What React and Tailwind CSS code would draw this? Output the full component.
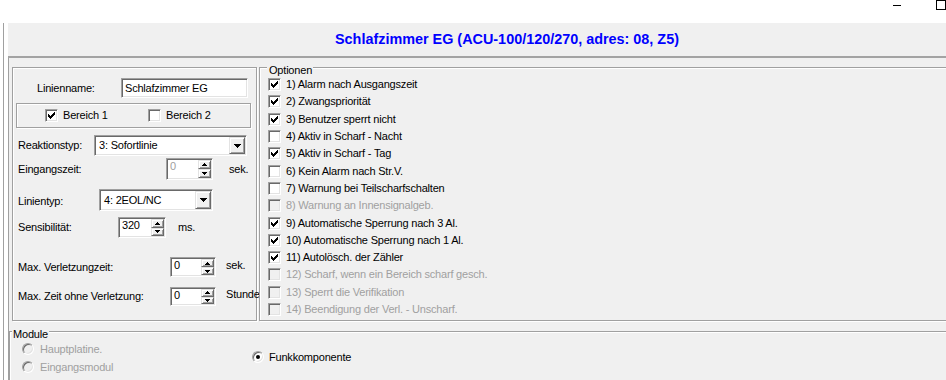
import React from "react";

const sunken =
  "border border-t-[#a0a0a0] border-l-[#a0a0a0] border-b-white border-r-white shadow-[inset_1px_1px_0_#696969,inset_-1px_-1px_0_#e3e3e3]";
const raised =
  "bg-[#f0f0f0] border border-t-[#e3e3e3] border-l-[#e3e3e3] border-b-[#696969] border-r-[#696969] shadow-[inset_1px_1px_0_#fff,inset_-1px_-1px_0_#a0a0a0]";
const etched = "border border-[#a0a0a0] shadow-[inset_1px_1px_0_#fff,1px_1px_0_#fff]";

function CheckMark() {
  return (
    <svg width="7" height="7" viewBox="0 0 7 7" shapeRendering="crispEdges" className="block">
      <path
        fill="#000"
        d="M6 0h1v1h-1zM5 1h2v1h-2zM0 2h1v1h-1zM4 2h3v1h-3zM0 3h2v1h-2zM3 3h3v1h-3zM0 4h5v1h-5zM1 5h3v1h-3zM2 6h1v1h-1z"
      />
    </svg>
  );
}

function Check({ checked, disabled }) {
  return (
    <div
      className={`w-[13px] h-[13px] shrink-0 flex items-center justify-center ${sunken} ${
        disabled ? "bg-[#f0f0f0]" : "bg-white"
      }`}
    >
      {checked && <CheckMark />}
    </div>
  );
}

function Radio({ checked, disabled }) {
  return (
    <div
      className={`w-[12px] h-[12px] shrink-0 rounded-full flex items-center justify-center ${sunken} ${
        disabled ? "bg-[#f0f0f0]" : "bg-white"
      }`}
    >
      {checked && <div className="w-[4px] h-[4px] rounded-full bg-black" />}
    </div>
  );
}

function Down7() {
  return (
    <svg width="7" height="4" viewBox="0 0 7 4" shapeRendering="crispEdges" className="block">
      <path fill="#000" d="M0 0h7v1h-7zM1 1h5v1h-5zM2 2h3v1h-3zM3 3h1v1h-1z" />
    </svg>
  );
}

function Up5() {
  return (
    <svg width="5" height="3" viewBox="0 0 5 3" shapeRendering="crispEdges" className="block">
      <path fill="#000" d="M2 0h1v1h-1zM1 1h3v1h-3zM0 2h5v1h-5z" />
    </svg>
  );
}

function Down5() {
  return (
    <svg width="5" height="3" viewBox="0 0 5 3" shapeRendering="crispEdges" className="block">
      <path fill="#000" d="M0 0h5v1h-5zM1 1h3v1h-3zM2 2h1v1h-1z" />
    </svg>
  );
}

function Combo({ cls, text }) {
  return (
    <div className={`${cls} ${sunken} bg-white p-px flex shrink-0`}>
      <div className="flex-1 flex items-center pl-[3px] overflow-hidden whitespace-nowrap">{text}</div>
      <div className={`w-[16px] ${raised} flex items-center justify-center`}>
        <Down7 />
      </div>
    </div>
  );
}

function Spin({ cls, value, disabled }) {
  return (
    <div className={`${cls} ${sunken} bg-white p-px flex shrink-0`}>
      <div className={`flex-1 pl-[2px] whitespace-nowrap ${disabled ? "text-[#a0a0a0]" : ""}`}>{value}</div>
      <div className="w-[13px] flex flex-col">
        <div className={`flex-1 ${raised} flex items-center justify-center`}>
          <Up5 />
        </div>
        <div className={`flex-1 ${raised} flex items-center justify-center`}>
          <Down5 />
        </div>
      </div>
    </div>
  );
}

const opts = [
  ["1) Alarm nach Ausgangszeit", true, false],
  ["2) Zwangspriorität", true, false],
  ["3) Benutzer sperrt nicht", true, false],
  ["4) Aktiv in Scharf - Nacht", false, false],
  ["5) Aktiv in Scharf - Tag", true, false],
  ["6) Kein Alarm nach Str.V.", false, false],
  ["7) Warnung bei Teilscharfschalten", false, false],
  ["8) Warnung an Innensignalgeb.", false, true],
  ["9) Automatische Sperrung nach 3 Al.", true, false],
  ["10) Automatische Sperrung nach 1 Al.", true, false],
  ["11) Autolösch. der Zähler", true, false],
  ["12) Scharf, wenn ein Bereich scharf gesch.", false, true],
  ["13) Sperrt die Verifikation", false, true],
  ["14) Beendigung der Verl. - Unscharf.", false, true],
];

export default function App() {
  return (
    <div className="w-[946px] h-[380px] overflow-hidden bg-white font-['Liberation_Sans',Arial,sans-serif] text-[11px] leading-[13px] tracking-[-0.2px] text-black flex flex-col">
      {/* caption remnant */}
      <div className="h-[23px] shrink-0 flex items-start">
        <div className="flex-1" />
        <div className="w-[8px] h-px bg-black mt-[5px] mr-[35px]" />
        <div className="w-[10px] h-[10px] border border-black" />
      </div>

      <div className="flex flex-1 min-h-0">
        {/* left frame strip */}
        <div className="w-[8px] shrink-0 flex">
          <div className="ml-[3px] w-px bg-[#a0a0a0]" />
        </div>

        {/* main panel */}
        <div className="flex-1 min-w-0 bg-[#f0f0f0] flex flex-col">
          <div className="h-[33px] shrink-0 flex items-center pl-[327px] whitespace-nowrap">
            <span className="text-[14.4px] leading-[17px] tracking-normal font-bold text-[#0000ff]">
              Schlafzimmer EG (ACU-100/120/270, adres: 08, Z5)
            </span>
          </div>
          <div className="h-[2px] shrink-0 bg-[#a3a3a3]" />

          <div className="flex-1 flex flex-col border-l border-[#a0a0a0]">
            <div className="flex mt-[9px] shrink-0">
              {/* left group */}
              <div className={`ml-[3px] w-[245px] h-[254px] shrink-0 ${etched} flex flex-col`}>
                <div className="flex items-center h-[20px] mt-[10px]">
                  <div className="w-[108px] pl-[24px] shrink-0">Linienname:</div>
                  <div className={`w-[127px] h-[20px] ${sunken} bg-white flex items-center pl-[3px] whitespace-nowrap`}>
                    Schlafzimmer EG
                  </div>
                </div>

                <div className={`ml-[3px] w-[235px] h-[25px] mt-[5px] ${etched} flex items-center`}>
                  <div className="w-[131px] pl-[28px] flex items-center gap-[5px] shrink-0">
                    <Check checked />
                    <span>Bereich 1</span>
                  </div>
                  <div className="flex items-center gap-[5px]">
                    <Check />
                    <span>Bereich 2</span>
                  </div>
                </div>

                <div className="flex items-center h-[21px] mt-[7px]">
                  <div className="w-[81px] pl-[5px] shrink-0">Reaktionstyp:</div>
                  <Combo cls="w-[153px] h-[21px]" text="3: Sofortlinie" />
                </div>

                <div className="flex items-center h-[22px] mt-[2px]">
                  <div className="w-[153px] pl-[5px] shrink-0">Eingangszeit:</div>
                  <Spin cls="w-[47px] h-[22px]" value="0" disabled />
                  <span className="ml-[16px]">sek.</span>
                </div>

                <div className="flex items-center h-[22px] mt-[9px]">
                  <div className="w-[86px] pl-[5px] shrink-0 mt-[2px]">Linientyp:</div>
                  <Combo cls="w-[114px] h-[22px]" text="4: 2EOL/NC" />
                </div>

                <div className="flex items-center h-[21px] mt-[6px]">
                  <div className="w-[105px] pl-[5px] shrink-0">Sensibilität:</div>
                  <Spin cls="w-[48px] h-[21px]" value="320" />
                  <span className="ml-[12px]">ms.</span>
                </div>

                <div className="flex items-center h-[20px] mt-[19px]">
                  <div className="w-[157px] pl-[5px] shrink-0">Max. Verletzungzeit:</div>
                  <Spin cls="w-[46px] h-[20px]" value="0" />
                  <span className="ml-[10px] mb-[4px]">sek.</span>
                </div>

                <div className="flex items-center h-[19px] mt-[10px]">
                  <div className="w-[157px] pl-[5px] shrink-0">Max. Zeit ohne Verletzung:</div>
                  <Spin cls="w-[46px] h-[19px]" value="0" />
                  <span className="ml-[10px] mb-[4px] whitespace-nowrap">Stunde</span>
                </div>
              </div>

              {/* options group */}
              <div className={`relative ml-[2px] w-[700px] h-[254px] shrink-0 ${etched}`}>
                <div className="absolute left-[7px] -top-[4px] bg-[#f0f0f0] pl-[2px] pr-[1px]">Optionen</div>
                <div className="pt-[8px] pl-[8px] flex flex-col">
                  {opts.map(([label, checked, disabled]) => (
                    <div key={label} className="h-[17.3px] flex items-center gap-[5px]">
                      <Check checked={checked} disabled={disabled} />
                      <span className={`whitespace-nowrap ${disabled ? "text-[#a0a0a0]" : ""}`}>{label}</span>
                    </div>
                  ))}
                </div>
              </div>
            </div>

            {/* module group */}
            <div className={`relative mt-[10px] w-[960px] h-[70px] shrink-0 ${etched}`}>
              <div className="absolute left-[2px] -top-[4px] bg-[#f0f0f0] pl-px pr-px">Module</div>
              <div className="pt-[8px] flex">
                <div className="w-[242px] pl-[12px] flex flex-col shrink-0">
                  <div className="h-[18px] flex items-center gap-[6px]">
                    <Radio disabled />
                    <span className="text-[#a0a0a0]">Hauptplatine.</span>
                  </div>
                  <div className="h-[18px] flex items-center gap-[6px]">
                    <Radio disabled />
                    <span className="text-[#a0a0a0]">Eingangsmodul</span>
                  </div>
                </div>
                <div className="h-[34px] flex items-center gap-[5px]">
                  <Radio checked />
                  <span>Funkkomponente</span>
                </div>
              </div>
            </div>
          </div>
        </div>
      </div>
    </div>
  );
}
